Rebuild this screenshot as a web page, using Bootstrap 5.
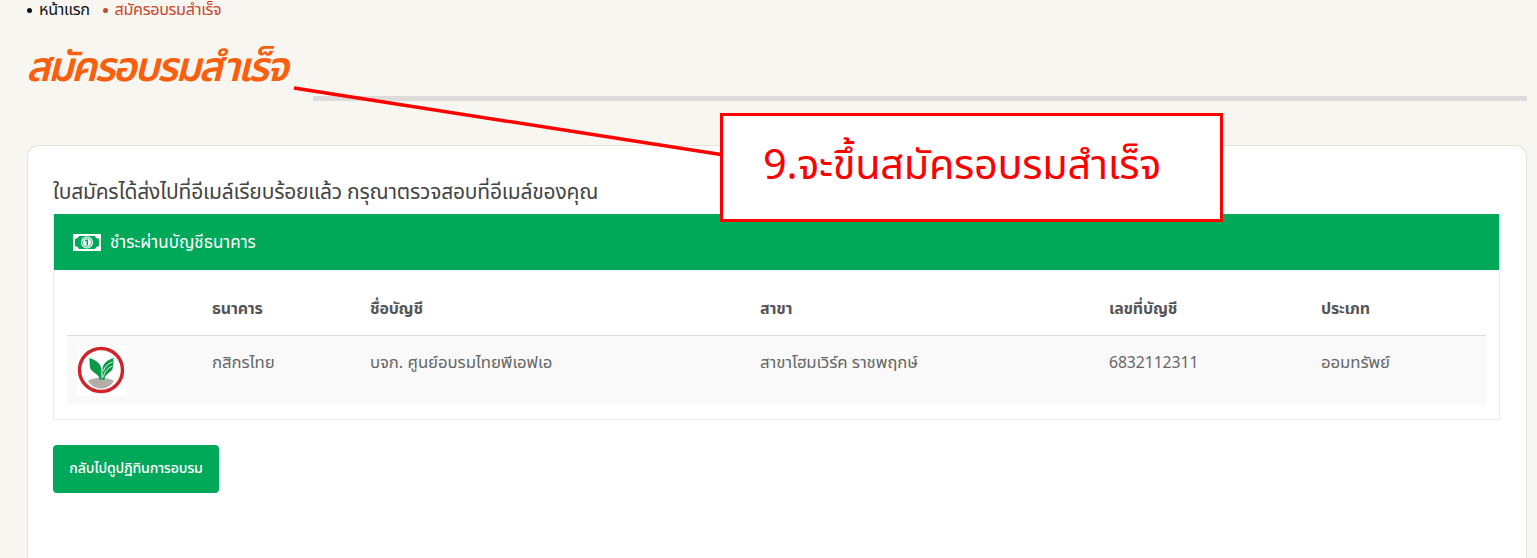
<!DOCTYPE html>
<html lang="th">
<head>
<meta charset="utf-8">
<title>สมัครอบรมสำเร็จ</title>
<link href="https://cdn.jsdelivr.net/npm/bootstrap@5.3.0/dist/css/bootstrap.min.css" rel="stylesheet">
<style>
html,body{height:558px;overflow:hidden}
body{background:#f8f6f1;font-family:"Noto Sans Thai","Noto Sans","Liberation Sans",sans-serif;color:#555;position:relative}
.crumbs{height:20px;padding:1px 0 0 27px;font-size:16.2px;line-height:18px;margin:0;list-style:none;gap:13px;letter-spacing:-.35px}
.crumbs li{color:#111}
.crumbs li::before{content:"";display:inline-block;width:5px;height:5px;border-radius:50%;background:currentColor;margin-right:7px;vertical-align:2px}
.crumbs li.now{color:#c9472b}
.head-row{height:125px;padding-left:26px;align-items:flex-start}
.page-title{font-size:41px;font-style:italic;font-weight:600;color:#f95f0f;margin:18px 0 0;line-height:60px;letter-spacing:-2.6px;white-space:nowrap}
.head-rule{position:absolute;left:313px;right:10px;top:96px;height:5px;background:#dcdbd9}
.sheet{margin:0 10px 0 27px;height:413px;background:#fff;border:1px solid #e4e2da;border-bottom:0;border-radius:12px 12px 0 0;padding:29px 26px 0 25px}
.sheet-lead{font-size:21px;line-height:35px;color:#444;margin:0;letter-spacing:-.19px;height:39px}
.bank-box{border:1px solid #e9e9e9;border-top:0;height:206px}
.bank-head{background:#00a85a;height:56px;color:#fff;font-size:17px;line-height:26px;padding-left:19px;gap:9px;margin:0}
.bank-head span{padding-top:2px}
.bank-body{padding:14px 13px}
.bank-table{margin:0;--bs-table-bg:transparent;table-layout:fixed;color:#666}
.bank-table th{font-size:16px;font-weight:700;height:51px;vertical-align:middle;border-bottom:1px solid #dcdcdc;padding:0;color:#555;letter-spacing:-.2px}
.bank-table td{background:#f9f9f9;height:70px;padding:0;vertical-align:top;font-size:16.8px;border:0;letter-spacing:-.1px;color:#666}
.bank-table td span{display:block;margin-top:15px}
.bank-table td .acct-no{font-size:15.8px;margin-top:16px}
.logo-wrap{margin:10px 0 0 10px;width:50px;height:50px;background:#fff;display:block}
.back-btn{margin-top:25px;background:#00a85a;color:#fff;border:0;border-radius:4px;width:166px;height:48px;font-size:14.2px;font-weight:500;padding:0;letter-spacing:-.2px}
.back-btn:hover{background:#00a85a;color:#fff}
.callout-line{position:absolute;left:0;top:0;pointer-events:none}
.callout{position:absolute;left:720px;top:113px;width:503px;height:109px;background:#fff;border:3px solid #f00;color:#f00;font-size:41.5px;line-height:102px;padding-left:40px;white-space:nowrap;letter-spacing:-.3px}
</style>
</head>
<body>
<ul class="crumbs d-flex"><li>หน้าแรก</li><li class="now">สมัครอบรมสำเร็จ</li></ul>
<div class="head-row d-flex"><h1 class="page-title">สมัครอบรมสำเร็จ</h1></div>
<div class="head-rule"></div>
<main class="sheet">
  <p class="sheet-lead">ใบสมัครได้ส่งไปที่อีเมล์เรียบร้อยแล้ว กรุณาตรวจสอบที่อีเมล์ของคุณ</p>
  <section class="bank-box">
    <div class="bank-head d-flex align-items-center">
      <svg width="28" height="17" viewBox="0 0 28 17" aria-hidden="true"><path fill="#fff" d="M0 0h28v17H0z"/><path fill="#00a85a" d="M6 2h16c.4 1.4 2 2.6 4 3v7c-2 .4-3.600 1.600-4 3H6c-.4-1.400-2-2.600-4-3V5c2-.4 3.600-1.600 4-3z"/><circle cx="14" cy="8.500" r="6" fill="#fff"/><circle cx="14" cy="8.500" r="4.500" fill="none" stroke="#00a85a" stroke-width=".8"/><path fill="#00a85a" d="M13.500 5.400h1.500v6.200h-1.500V7l-1.200.6-.4-1.100z"/></svg>
      <span>ชำระผ่านบัญชีธนาคาร</span>
    </div>
    <div class="bank-body">
      <table class="table bank-table">
        <colgroup><col style="width:145px"><col style="width:158px"><col style="width:390px"><col style="width:349px"><col style="width:212px"><col></colgroup>
        <thead><tr><th></th><th>ธนาคาร</th><th>ชื่อบัญชี</th><th>สาขา</th><th>เลขที่บัญชี</th><th>ประเภท</th></tr></thead>
        <tbody><tr>
          <td><div class="logo-wrap"><svg width="50" height="50" viewBox="0 0 50 50" role="img" aria-label="ธนาคารกสิกรไทย"><circle cx="24" cy="24" r="21.500" fill="#fff" stroke="#d2232a" stroke-width="3.400"/><path fill="#b3aeaa" d="M11 35c4-3 8-3 12-3 5 0 9 0 14 3-3 5-8 7.500-13 7.500S14 40 11 35z"/><path fill="#0a9a48" d="M12.500 12c6 2 11 5 12 11v11h-1.500c-1-6-7-7-9.500-11-1-3-1-7-1-11z"/><path fill="#0a9a48" d="M36.500 12c-6 2-10.500 5-11 11v11h2c0-6 6-7 8-11 1-3 1-7 1-11z"/><path fill="none" stroke="#fff" stroke-width=".9" d="M26.500 31c.5-5 4-9 9-11M26.500 25c1-4 4-7 9-9"/></svg></div></td>
          <td><span>กสิกรไทย</span></td><td><span>บจก. ศูนย์อบรมไทยพีเอฟเอ</span></td><td><span>สาขาโฮมเวิร์ค ราชพฤกษ์</span></td><td><span class="acct-no">6832112311</span></td><td><span>ออมทรัพย์</span></td>
        </tr></tbody>
      </table>
    </div>
  </section>
  <button type="button" class="btn back-btn">กลับไปดูปฏิทินการอบรม</button>
</main>
<svg class="callout-line" width="730" height="170" aria-hidden="true"><line x1="294" y1="88" x2="724" y2="155" stroke="#f00" stroke-width="3.500"/></svg>
<div class="callout">9.จะขึ้นสมัครอบรมสำเร็จ</div>
</body>
</html>
